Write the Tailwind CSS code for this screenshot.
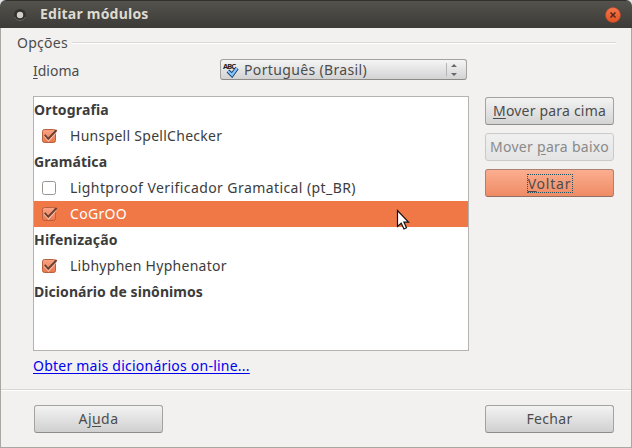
<!DOCTYPE html>
<html lang="pt-BR">
<head>
<meta charset="utf-8">
<title>Editar módulos</title>
<script src="https://cdn.jsdelivr.net/npm/@tailwindcss/browser@4"></script>
</head>
<body class="w-[632px] h-[448px] overflow-hidden bg-[#dfe3e6] font-['Noto_Sans',sans-serif] text-[14px] leading-[26px] text-[#4c4c4c] whitespace-nowrap">
<svg class="absolute size-0">
  <defs>
    <linearGradient id="cb" x1="0" y1="0" x2="0" y2="1"><stop offset="0" stop-color="#fba588"/><stop offset="1" stop-color="#ea7548"/></linearGradient>
    <symbol id="on" viewBox="0 0 18 16">
      <rect x="1.5" y="1.5" width="13" height="13" rx="2" fill="url(#cb)" stroke="#b9603c"/>
      <path d="M4 7.500 7.500 11.500 14.500 3.500" fill="none" stroke="#fbc0a8" stroke-width="3.200"/>
      <path d="M3.800 6.800 7.300 10.800 15.600 2" fill="none" stroke="#6b4030" stroke-width="2"/>
    </symbol>
    <symbol id="off" viewBox="0 0 18 16">
      <rect x="1.5" y="1.5" width="13" height="13" rx="2" fill="#fff" stroke="#989592"/>
    </symbol>
  </defs>
</svg>
<div class="flex flex-col w-[632px] h-[448px] rounded-t-[6px] overflow-hidden bg-[#f2f1f0]">
  <header class="flex items-center h-7 shrink-0 pl-[13px] pr-[11px] border-t border-[#32312d] bg-linear-to-b from-[#53524c] to-[#3c3b37] text-[#dfdbd2]">
    <svg class="size-[14px]" viewBox="0 0 14 14"><circle cx="7" cy="7" r="6" fill="#33322e"/><path d="M1.500 9A6 6 0 0 0 12.500 9" fill="none" stroke="#68675f"/><circle cx="7" cy="7" r="3.200" fill="#d3cfc7"/></svg>
    <h1 class="relative -top-px ml-[13px] font-bold tracking-[0.22px]">Editar módulos</h1>
    <svg class="ml-auto size-4" viewBox="0 0 16 16"><defs><linearGradient id="cl" x1="0" y1="0" x2="0" y2="1"><stop offset="0" stop-color="#f5764d"/><stop offset="1" stop-color="#e25320"/></linearGradient></defs><circle cx="8" cy="8" r="7.500" fill="url(#cl)" stroke="#b9482a" stroke-width=".6"/><path d="m5.500 5.500 5 5m0-5-5 5" stroke="#53291a" stroke-width="1.500"/></svg>
  </header>
  <main class="flex flex-col grow border-x border-b border-[#a9a7a1]">
    <div class="flex items-center h-[30px] pl-4 pr-[15px]">
      <span class="tracking-[0.28px]">Opções</span>
      <span class="ml-1 grow h-[2px] border-t border-[#dbd9d6] bg-white"></span>
    </div>
    <div class="flex items-start h-[25px] pl-8">
      <span class="w-[187px]"><u class="underline-offset-2">I</u>dioma</span>
      <button class="mt-px flex items-center w-[247px] h-[21px] rounded-[3px] border border-[#a3a19e] border-b-[#8d8b88] bg-linear-to-b from-[#f5f5f5] to-[#d3d3d3] pl-[2px] pr-[9px] leading-[19px]">
        <svg class="w-4 h-4" viewBox="0 0 16 16"><text x="0" y="6.500" font-family="Noto Sans" font-size="7.500" font-weight="bold" textLength="13" fill="#252525">ABC</text><path d="m5 9 4 4 5-7" fill="none" stroke="#173c6b" stroke-width="4"/><path d="m5 9 4 4 5-7" fill="none" stroke="#85c5fa" stroke-width="2.200"/></svg>
        <span class="ml-[5px] tracking-[0.35px]">Português (Brasil)</span>
        <span class="ml-auto h-[13px] w-px bg-[#b5b5b5]"></span>
        <svg class="ml-1 w-[6px] h-[13px]" viewBox="0 0 6 13"><path d="M0 4 3 1 6 4ZM0 10 3 13 6 10Z" fill="#686868"/></svg>
      </button>
    </div>
    <div class="flex mt-[13px] pl-8 pr-[17px] justify-between">
      <div class="w-[436px] h-[255px] border border-[#b5b3af] bg-white text-[#3c3c3c]">
        <div class="h-[26px] font-bold tracking-[0.15px]">Ortografia</div>
        <div class="flex items-center h-[26px] pl-[7px]"><svg class="w-[18px] h-4"><use href="#on"/></svg><span class="ml-[11px] tracking-[0.28px]">Hunspell SpellChecker</span></div>
        <div class="h-[26px] font-bold tracking-[0.08px]">Gramática</div>
        <div class="flex items-center h-[26px] pl-[7px]"><svg class="w-[18px] h-4"><use href="#off"/></svg><span class="ml-[11px] tracking-[0.42px]">Lightproof Verificador Gramatical (pt_BR)</span></div>
        <div class="flex items-center h-[26px] pl-[7px] bg-[#f07746] text-white"><svg class="w-[18px] h-4"><use href="#on"/></svg><span class="ml-[11px] tracking-[0.3px]">CoGrOO</span></div>
        <div class="h-[26px] font-bold tracking-[0.2px]">Hifenização</div>
        <div class="flex items-center h-[26px] pl-[7px]"><svg class="w-[18px] h-4"><use href="#on"/></svg><span class="ml-[11px] tracking-[0.28px]">Libhyphen Hyphenator</span></div>
        <div class="h-[26px] font-bold tracking-[0.06px]">Dicionário de sinônimos</div>
      </div>
      <div class="flex flex-col gap-2 pt-px">
        <button class="w-[129px] h-7 rounded-[3px] border border-[#a5a3a0] border-b-[#8e8c89] bg-linear-to-b from-[#f3f3f3] to-[#d4d4d4] tracking-[0.2px]"><u class="underline-offset-2">M</u>over para cima</button>
        <button class="w-[129px] h-7 rounded-[3px] border border-[#cccac8] bg-linear-to-b from-[#f0f0f0] to-[#e4e4e4] tracking-[0.28px] text-[#898989]">Mover <u class="underline-offset-2">p</u>ara baixo</button>
        <button class="flex items-center justify-center w-[129px] h-7 rounded-[3px] border border-[#ad8172] border-b-[#926f62] bg-linear-to-b from-[#fcae90] to-[#ee8b64]"><span class="h-[19px] w-[46px] border border-dotted border-[#245566] leading-[17px] tracking-[0.8px]"><u class="underline-offset-2">V</u>oltar</span></button>
      </div>
    </div>
    <a class="pl-8 mt-[2px] h-[26px] text-[#0000ee]"><span class="underline underline-offset-2 tracking-[0.23px]">Obter mais dicionários on-line...</span></a>
    <div class="mt-[10px] h-[2px] border-t border-[#d8d6d3] bg-white"></div>
    <footer class="flex justify-between mt-[14px] pl-[33px] pr-[17px]">
      <button class="w-[129px] h-7 rounded-[3px] border border-[#a5a3a0] border-b-[#8e8c89] bg-linear-to-b from-[#f3f3f3] to-[#d0d0d0] tracking-[0.45px]">Aj<u class="underline-offset-2">u</u>da</button>
      <button class="w-[129px] h-7 rounded-[3px] border border-[#a5a3a0] border-b-[#8e8c89] bg-linear-to-b from-[#f3f3f3] to-[#d0d0d0] tracking-[0.3px]">Fechar</button>
    </footer>
  </main>
</div>
<svg class="absolute left-[396px] top-[209px] w-[15px] h-[22px]" viewBox="0 0 15 22"><path d="M1.500 1.500V17.500L5.200 14.200 8 20 10.500 18.800 7.900 13.200H12.500Z" fill="#fff" stroke="#111" stroke-width="1.200"/></svg>
</body>
</html>
